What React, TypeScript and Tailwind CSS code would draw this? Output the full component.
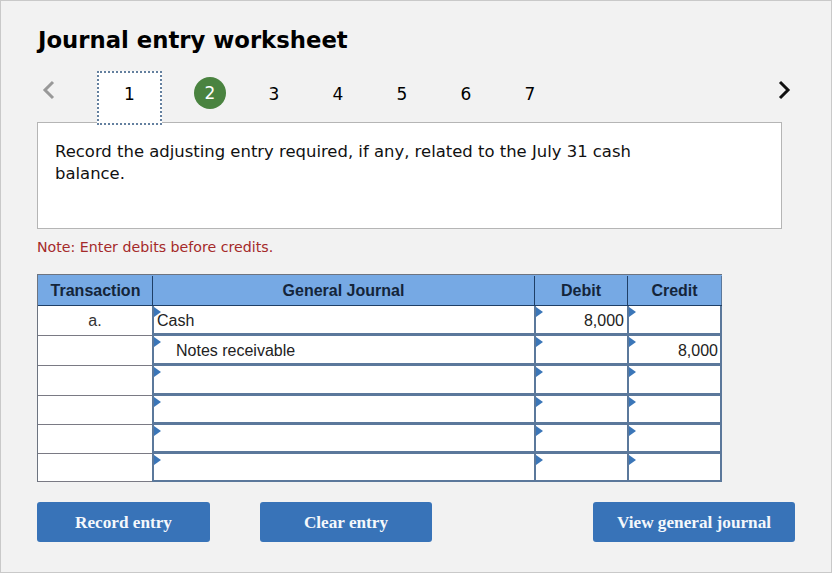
const steps = [2, 3, 4, 5, 6, 7];

const rows = [
  { tx: "a.", account: "Cash", debit: "8,000", credit: "", h: "h-[30px]", edge: "border-b-[3px]" },
  { tx: "", account: "Notes receivable", indent: true, debit: "", credit: "8,000", h: "h-[30px]", edge: "border-b-[3px]" },
  { tx: "", account: "", debit: "", credit: "", h: "h-[30px]", edge: "border-b-[3px]" },
  { tx: "", account: "", debit: "", credit: "", h: "h-[29px]", edge: "border-b-[3px]" },
  { tx: "", account: "", debit: "", credit: "", h: "h-[29px]", edge: "border-b-[3px]" },
  { tx: "", account: "", debit: "", credit: "", h: "h-[28px]", edge: "border-b-2" },
];

function Marker() {
  return <span className="absolute left-0 top-[1px] h-0 w-0 border-y-[5px] border-l-[7px] border-y-transparent border-l-[#3b76b8]" />;
}

function InputCell({ width, align, edge, children }: { width: string; align?: string; edge: string; children?: React.ReactNode }) {
  return (
    <div className={`relative flex h-full shrink-0 items-center border-l-2 border-[#5b789b] pr-[3px] pl-[3px] pt-[3px] text-[16px] text-[#222] ${edge} ${width} ${align ?? ""}`}>
      <Marker />
      {children}
    </div>
  );
}

function ActionButton({ label, width }: { label: string; width: string }) {
  return (
    <button className={`flex h-[40px] items-center justify-center rounded-[3px] bg-[#3873b8] pt-[2px] text-[17.2px] font-bold text-[#f4f8fc] [font-family:'Liberation_Serif',serif] ${width}`}>
      {label}
    </button>
  );
}

export default function App() {
  return (
    <div className="h-[573px] w-[832px] border border-[#c9c9c9] bg-[#f2f2f2] pl-[36px] pt-[23px] [font-family:'DejaVu_Sans',sans-serif] text-black">
      <h1 className="h-[32px] pl-[1px] text-[22.75px] font-bold leading-[32px]">Journal entry worksheet</h1>

      <div className="relative z-10 mt-[15px] flex h-[54px] items-start">
        <svg width="14" height="22" viewBox="0 0 14 22" className="ml-[4px] mt-[9px] shrink-0">
          <path d="M12 2 L4 10 L12 18" fill="none" stroke="#999" strokeWidth="3" />
        </svg>
        <div className="ml-[42px] flex h-[54px] w-[65px] shrink-0 items-center justify-center border-2 border-dotted border-[#64809f] bg-white pb-[6px] text-[17px]">1</div>
        <div className="ml-[32px] mt-[6px] flex h-[32px] w-[32px] shrink-0 items-center justify-center rounded-full bg-[#4a8340] pt-[1px] text-[17px] text-white">2</div>
        {steps.slice(1).map((n) => (
          <div key={n} className="ml-[32px] mt-[8px] flex h-[32px] w-[32px] shrink-0 items-center justify-center text-[17px]">{n}</div>
        ))}
        <svg width="14" height="22" viewBox="0 0 14 22" className="ml-[232px] mt-[9px] shrink-0">
          <path d="M2 2 L10 10 L2 18" fill="none" stroke="#111" strokeWidth="3" />
        </svg>
      </div>

      <div className="mt-[-3px] h-[107px] w-[745px] border border-[#b5b5b5] bg-white pl-[17px] pr-[126px] pt-[18px] text-[16.45px] leading-[22px] text-[#111]">
        Record the adjusting entry required, if any, related to the July 31 cash balance.
      </div>

      <p className="mt-[9px] h-[18px] text-[14.2px] leading-[18px] text-[#a52a2a]">Note: Enter debits before credits.</p>

      <div className="mt-[18px] w-[685px] border-l border-t border-[#6d7480] [font-family:'Liberation_Sans',sans-serif]">
        <div className="flex h-[31px] border-b border-[#1f3f66] bg-[#76a9e4] pt-[1px] text-[16px] font-bold text-[#14253a]">
          <div className="flex w-[115px] shrink-0 items-center justify-center border-r border-[#1f3f66] pl-[1px]">Transaction</div>
          <div className="flex w-[382px] shrink-0 items-center justify-center border-r border-[#1f3f66]">General Journal</div>
          <div className="flex w-[93px] shrink-0 items-center justify-center border-r border-[#1f3f66]">Debit</div>
          <div className="flex w-[94px] shrink-0 items-center justify-center border-r border-[#5b789b]">Credit</div>
        </div>
        {rows.map((row, i) => (
          <div key={i} className={`flex bg-white ${row.h}`}>
            <div className="flex h-full w-[114px] shrink-0 items-center justify-center border-b border-[#7a7a84] pt-[1px] text-[16px] text-[#333]">{row.tx}</div>
            <InputCell width="w-[382px]" edge={row.edge}><span className={row.indent ? "pl-[19px]" : ""}>{row.account}</span></InputCell>
            <InputCell width="w-[93px]" align="justify-end" edge={row.edge}>{row.debit}</InputCell>
            <div className={`relative flex h-full w-[95px] shrink-0 items-center justify-end border-x-2 border-[#5b789b] pr-[2px] pt-[3px] text-[16px] text-[#222] ${row.edge}`}>
              <Marker />
              {row.credit}
            </div>
          </div>
        ))}
      </div>

      <div className="mt-[20px] flex w-[758px]">
        <ActionButton label="Record entry" width="w-[173px]" />
        <div className="ml-[50px]"><ActionButton label="Clear entry" width="w-[172px]" /></div>
        <div className="ml-auto"><ActionButton label="View general journal" width="w-[202px]" /></div>
      </div>
    </div>
  );
}
